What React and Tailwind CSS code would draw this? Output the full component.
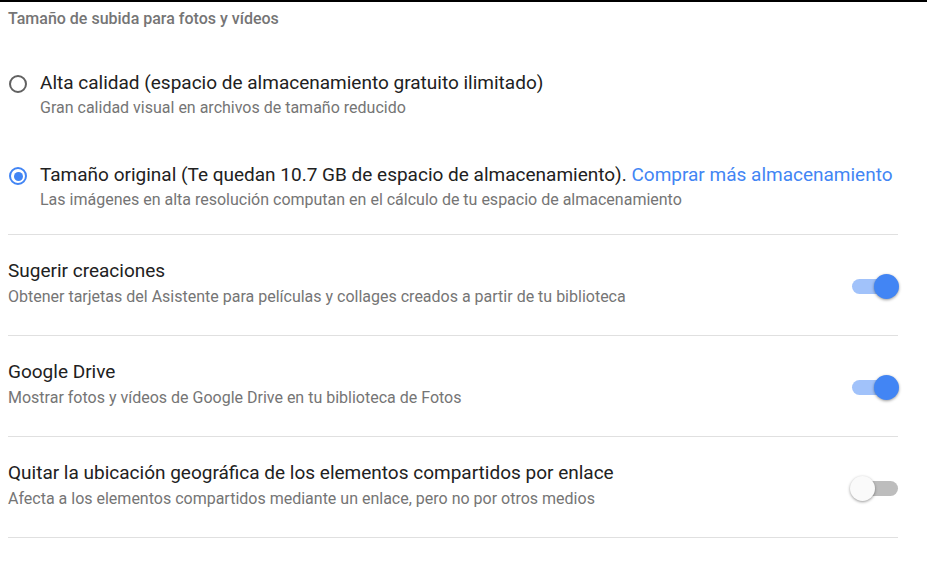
import React from "react";

const RadioOption = ({ checked, title, subtitle, className }) => (
  <div className={"flex items-start " + (className || "")}>
    <div className="w-8 flex-shrink-0 pt-[4px]">
      <div
        className={
          "w-[18px] h-[18px] ml-px rounded-full border-2 flex items-center justify-center " +
          (checked ? "border-[#4285f4]" : "border-[#616161]")
        }
      >
        {checked && <div className="w-[9px] h-[9px] rounded-full bg-[#4285f4]" />}
      </div>
    </div>
    <div>
      <div className="text-[19px] leading-6 text-[#212121]">{title}</div>
      <div className="text-[16px] leading-5 mt-[3px] text-[#757575]">{subtitle}</div>
    </div>
  </div>
);

const Toggle = ({ on }) => (
  <div className="relative w-[47px] h-[24px] mt-[6px] flex items-center flex-shrink-0">
    <div
      className={
        "w-[46px] h-[15px] rounded-full ml-[1px] " + (on ? "bg-[#a1c2fa]" : "bg-[#bdbdbd]")
      }
    />
    <div
      className={
        "absolute top-0 w-[25px] h-[25px] rounded-full shadow-[0_1px_3px_rgba(0,0,0,0.4)] " +
        (on ? "-right-px bg-[#4285f4]" : "-left-px bg-[#fafafa]")
      }
    />
  </div>
);

const ToggleRow = ({ title, subtitle, on }) => (
  <div className="flex items-center justify-between pt-6 pb-7 border-b border-[#e0e0e0]">
    <div>
      <div className="text-[19px] leading-6 text-[#212121]">{title}</div>
      <div className="text-[16px] leading-5 mt-1 text-[#757575]">{subtitle}</div>
    </div>
    <Toggle on={on} />
  </div>
);

export default function App() {
  return (
    <div
      className="w-[927px] h-[567px] bg-white border-t-2 border-black overflow-hidden"
      style={{ fontFamily: "Roboto, 'Noto Sans', sans-serif" }}
    >
      <div className="ml-2 w-[890px]">
        <div className="pt-[7px] text-[16px] leading-5 font-medium text-[#757575]">
          Tamaño de subida para fotos y vídeos
        </div>
        <div className="border-b border-[#e0e0e0] pb-6">
          <RadioOption
            className="mt-[42px]"
            title="Alta calidad (espacio de almacenamiento gratuito ilimitado)"
            subtitle="Gran calidad visual en archivos de tamaño reducido"
          />
          <RadioOption
            className="mt-[45px]"
            checked
            title={
              <>
                Tamaño original (Te quedan 10.7 GB de espacio de almacenamiento).{" "}
                <span className="text-[#4285f4]">Comprar más almacenamiento</span>
              </>
            }
            subtitle="Las imágenes en alta resolución computan en el cálculo de tu espacio de almacenamiento"
          />
        </div>
        <ToggleRow
          on
          title="Sugerir creaciones"
          subtitle="Obtener tarjetas del Asistente para películas y collages creados a partir de tu biblioteca"
        />
        <ToggleRow
          on
          title="Google Drive"
          subtitle="Mostrar fotos y vídeos de Google Drive en tu biblioteca de Fotos"
        />
        <ToggleRow
          title="Quitar la ubicación geográfica de los elementos compartidos por enlace"
          subtitle="Afecta a los elementos compartidos mediante un enlace, pero no por otros medios"
        />
      </div>
    </div>
  );
}
